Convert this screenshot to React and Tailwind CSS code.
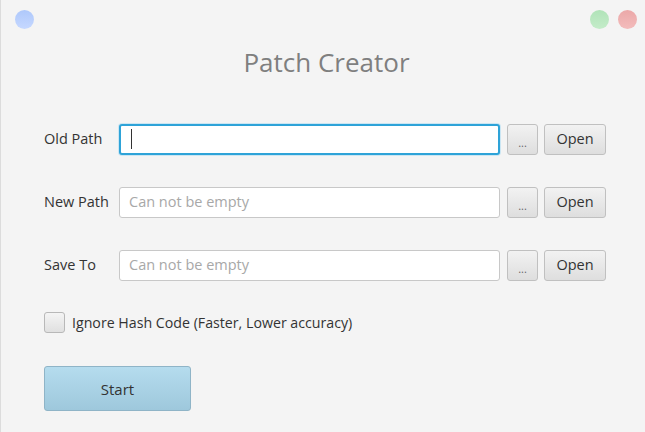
import React from "react";

function Row({ label, focused, placeholder }) {
  return (
    <div className="flex items-center h-[32px]">
      <div className="w-[75px] text-[14.5px] text-[#333333]">{label}</div>
      <div
        className={
          "w-[381px] h-[31px] rounded-[3px] bg-white flex items-center px-[9px] " +
          (focused
            ? "border-2 border-[#2ea3d8] shadow-[0_0_0_1px_#cbe6f3]"
            : "border border-[#c8c8c8]")
        }
      >
        {focused ? (
          <div className="w-[1px] h-[20px] bg-[#333] ml-[1px]" />
        ) : (
          <span className="text-[14.5px] text-[#a8a8a8]">{placeholder}</span>
        )}
      </div>
      <button className="ml-[7px] w-[31px] h-[31px] rounded-[3px] border border-[#c0c0c0] bg-gradient-to-b from-[#f2f2f2] to-[#dedede] text-[11px] text-[#666] leading-none pt-[6px]">
        ...
      </button>
      <button className="ml-[6px] w-[62px] h-[31px] rounded-[3px] border border-[#c0c0c0] bg-gradient-to-b from-[#f2f2f2] to-[#dedede] text-[14.5px] text-[#333]">
        Open
      </button>
    </div>
  );
}

export default function App() {
  return (
    <div
      className="relative w-[645px] h-[432px] bg-[#f4f4f4] border-l border-[#dcdcdc] overflow-hidden"
      style={{ fontFamily: '"Open Sans", "Noto Sans", sans-serif' }}
    >
      <div className="absolute left-[14px] top-[10px] w-[19px] h-[19px] rounded-full bg-gradient-to-b from-[#aec8fb] to-[#c6d8ff]" />
      <div className="absolute left-[589px] top-[10px] w-[19px] h-[19px] rounded-full bg-gradient-to-b from-[#b0e3b8] to-[#c4ecc9]" />
      <div className="absolute left-[617px] top-[10px] w-[19px] h-[19px] rounded-full bg-gradient-to-b from-[#eba8a8] to-[#f3bcbc]" />

      <div className="pt-[44px] pl-[7px] text-center text-[26px] text-[#7f7f7f] leading-[36px]">
        Patch Creator
      </div>

      <div className="pl-[43px] pt-[43px] flex flex-col gap-[31px]">
        <Row label="Old Path" focused />
        <Row label="New Path" placeholder="Can not be empty" />
        <Row label="Save To" placeholder="Can not be empty" />
      </div>

      <div className="pl-[43px] pt-[31px] flex items-center">
        <div className="w-[21px] h-[21px] rounded-[3px] border border-[#b8b8b8] bg-gradient-to-b from-[#f4f4f4] to-[#e0e0e0]" />
        <span className="ml-[7px] text-[14.2px] text-[#333]">
          Ignore Hash Code (Faster, Lower accuracy)
        </span>
      </div>

      <div className="pl-[43px] pt-[33px]">
        <button className="w-[147px] h-[45px] rounded-[3px] border border-[#8fb4c7] bg-gradient-to-b from-[#b5dcee] to-[#9ec8dc] text-[15px] text-[#333]">
          Start
        </button>
      </div>
    </div>
  );
}
